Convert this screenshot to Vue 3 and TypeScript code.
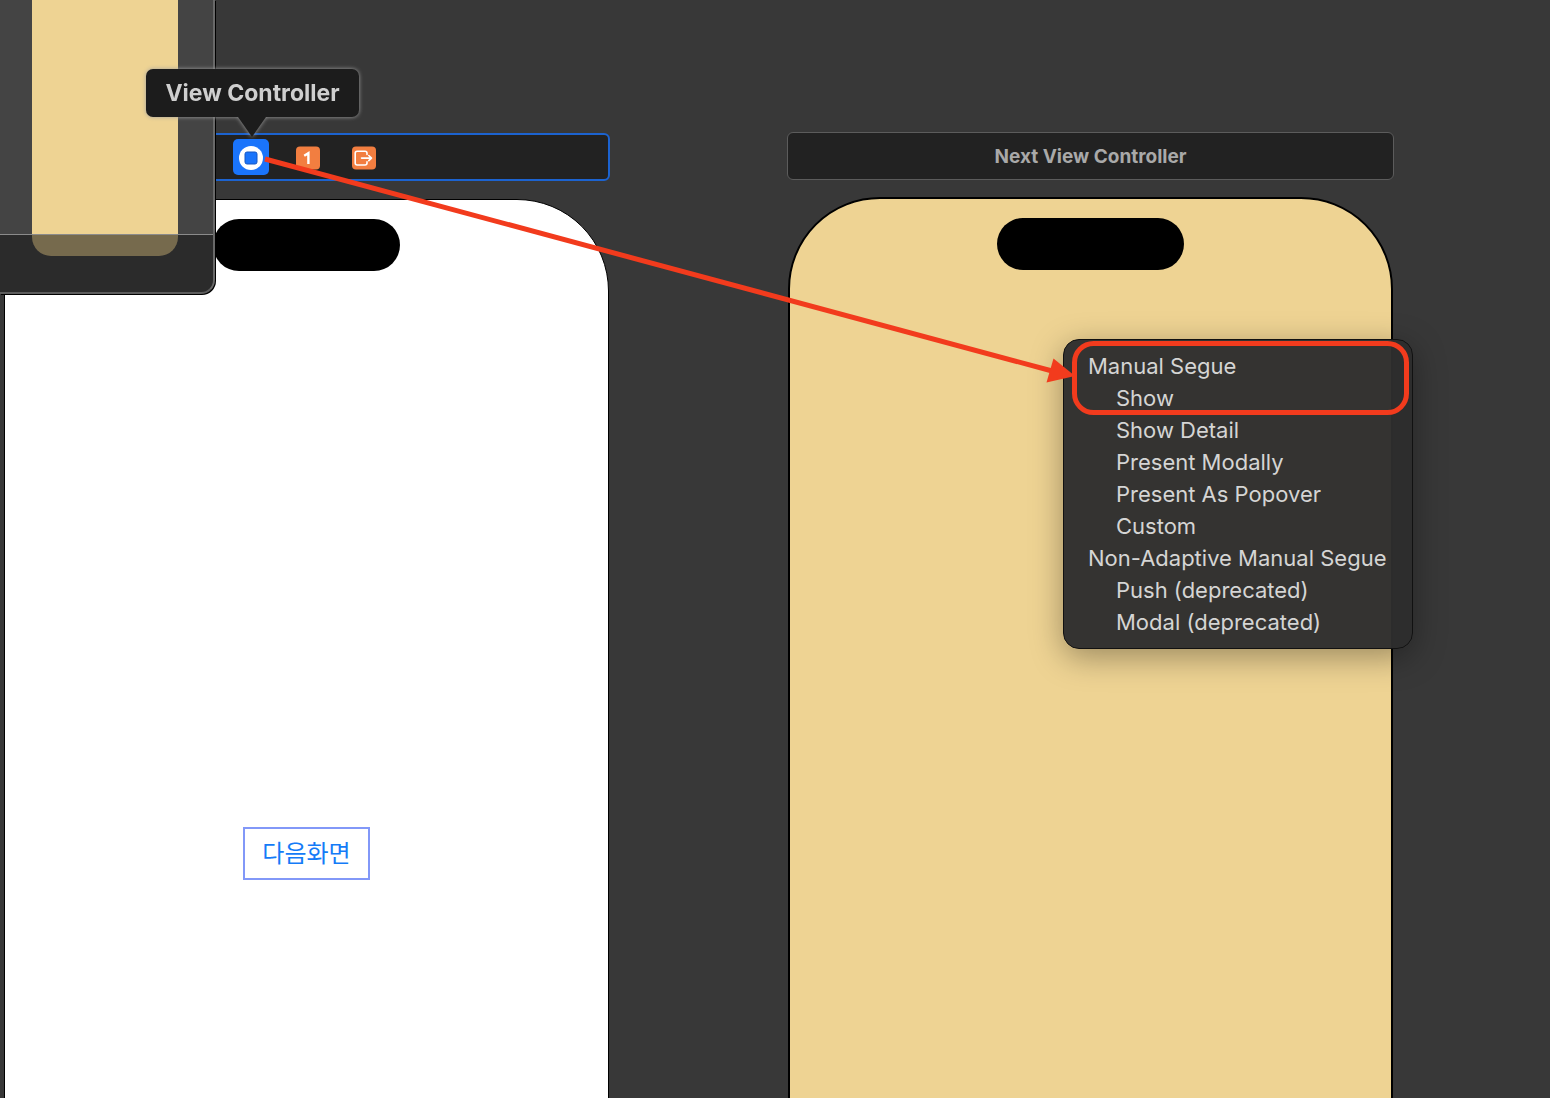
<script setup lang="ts">
interface MenuRow {
  label: string
  heading?: boolean
}

const menuRows: MenuRow[] = [
  { label: 'Manual Segue', heading: true },
  { label: 'Show' },
  { label: 'Show Detail' },
  { label: 'Present Modally' },
  { label: 'Present As Popover' },
  { label: 'Custom' },
  { label: 'Non-Adaptive Manual Segue', heading: true },
  { label: 'Push (deprecated)' },
  { label: 'Modal (deprecated)' },
]
</script>

<template>
  <main class="canvas">
    <section class="scene scene-first" aria-label="View Controller scene">
      <header class="dock dock-selected">
        <button class="dock-item" type="button" aria-label="View Controller">
          <svg viewBox="0 0 36 36" width="36" height="36">
            <rect width="36" height="36" rx="5" fill="#1a74fb" />
            <circle cx="18" cy="19" r="12" fill="#fff" />
            <rect x="12" y="13" width="12" height="12" rx="2" fill="#1a74fb" stroke="#1557c4" stroke-width="1" />
          </svg>
        </button>
        <button class="dock-item" type="button" aria-label="First Responder">
          <svg viewBox="0 0 36 36" width="36" height="36">
            <rect x="7" y="7.5" width="24" height="23" rx="4" fill="#f27e40" />
            <path d="M15.2 16.8L19.4 14.2V25" fill="none" stroke="#fff" stroke-width="2.4" />
          </svg>
        </button>
        <button class="dock-item" type="button" aria-label="Exit">
          <svg viewBox="0 0 36 36" width="36" height="36">
            <rect x="7" y="7.5" width="24" height="23" rx="4" fill="#f27e40" />
            <g fill="none" stroke="#fff" stroke-width="1.6" stroke-linecap="round" stroke-linejoin="round">
              <path d="M22 15.5V14.2Q22 12.2 20 12.2H12.2Q10.200 12.2 10.2 14.2V24Q10.2 26 12.2 26H20Q22 26 22 24V22.7" />
              <path d="M16.500 19.100H26.400M23.800 16.500L26.500 19.100L23.800 21.700" />
            </g>
          </svg>
        </button>
      </header>
      <div class="phone phone-light">
        <div class="island"></div>
        <button class="next-button" type="button">다음화면</button>
      </div>
    </section>

    <section class="scene scene-next" aria-label="Next View Controller scene">
      <header class="dock">Next View Controller</header>
      <div class="phone phone-sand">
        <div class="island"></div>
      </div>
    </section>

    <aside class="minimap" aria-label="Canvas overview">
      <div class="minimap-phone"></div>
      <div class="minimap-shade"></div>
    </aside>

    <div class="tooltip" role="tooltip">View Controller</div>

    <ul class="segue-menu">
      <li v-for="row in menuRows" :key="row.label">
        <span v-if="row.heading" class="menu-heading">{{ row.label }}</span>
        <button v-else class="menu-action" type="button">{{ row.label }}</button>
      </li>
    </ul>

    <svg class="annotation" width="1550" height="700" viewBox="0 0 1550 700" aria-hidden="true">
      <path d="M265 159L1054 371.5" fill="none" stroke="#f23b1d" stroke-width="5" />
      <path d="M1053.5 358.5L1075 376L1046.5 382.5Z" fill="#f23b1d" />
      <rect x="1074.5" y="343.5" width="332" height="69" rx="19" fill="none" stroke="#f23b1d" stroke-width="5" />
    </svg>
  </main>
</template>

<style>
body {
  margin: 0;
  background: #383838;
}
</style>

<style scoped>
.canvas {
  position: relative;
  height: 100vh;
  overflow: hidden;
  background: #383838;
  font-family: Inter, "Noto Sans CJK KR", sans-serif;
}

button {
  margin: 0;
  padding: 0;
  border: 0;
  background: none;
  font: inherit;
  color: inherit;
}

.scene {
  position: absolute;
  width: 607px;
}

.scene-first {
  top: 133px;
  left: 3px;
}

.scene-next {
  top: 132px;
  left: 787px;
}

.dock {
  box-sizing: border-box;
  display: flex;
  align-items: center;
  justify-content: center;
  gap: 20px;
  height: 48px;
  border: 1px solid #5c5c5c;
  border-radius: 6px;
  background: #222;
  color: #a9a9a9;
  font-size: 19px;
  font-weight: 700;
}

.dock-selected {
  border: 2px solid #1c63d0;
}

.dock-item {
  width: 36px;
  height: 36px;
}

.dock-item svg {
  display: block;
}

.phone {
  box-sizing: border-box;
  display: flex;
  flex-direction: column;
  align-items: center;
  min-height: 1303px;
  margin: 17px 1px 0;
  padding-top: 19px;
  border: 2px solid #000;
  border-radius: 92px;
}

.phone-light {
  margin-top: 18px;
  border-width: 1px;
  background: #fff;
}

.phone-sand {
  background: #eed393;
}

.island {
  width: 187px;
  height: 52px;
  border-radius: 26px;
  background: #000;
}

.next-button {
  box-sizing: border-box;
  width: 127px;
  height: 53px;
  margin-top: 556px;
  padding-bottom: 4px;
  border: 2px solid #8298f8;
  color: #147bf7;
  font-family: "Noto Sans CJK KR", sans-serif;
  font-size: 24px;
  line-height: 40px;
}

.minimap {
  box-sizing: border-box;
  position: absolute;
  top: 0;
  left: 0;
  width: 215px;
  height: 294px;
  overflow: hidden;
  border-right: 2px solid #696969;
  border-bottom: 2px solid #5c5c5c;
  border-bottom-right-radius: 14px;
  background: #444;
  box-shadow: 1px 1px 0 #000;
}

.minimap-phone {
  width: 146px;
  height: 256px;
  margin-left: 32px;
  border-radius: 0 0 19px 19px;
  background: #eed393;
}

.minimap-shade {
  position: absolute;
  inset: 234px 0 0;
  border-top: 1px solid #8b8b8b;
  background: rgba(23, 23, 23, 0.56);
}

.tooltip {
  position: absolute;
  top: 69px;
  left: 146px;
  width: 213px;
  border-radius: 7px;
  background: #1c1c1c;
  color: #cfcfcf;
  filter: drop-shadow(0 0 2px #a0a0a0);
  font-size: 23px;
  font-weight: 700;
  line-height: 48px;
  text-align: center;
}

.tooltip::after {
  content: "";
  position: absolute;
  top: 100%;
  left: 92px;
  border: 14px solid transparent;
  border-top: 20px solid #1c1c1c;
  border-bottom: 0;
}

.segue-menu {
  box-sizing: border-box;
  position: absolute;
  top: 339px;
  left: 1063px;
  width: 350px;
  margin: 0;
  padding: 10px 0 10px 24px;
  border: 1px solid #111;
  border-radius: 16px;
  background: rgba(45, 45, 45, 0.97);
  box-shadow: 0 8px 32px rgba(0, 0, 0, 0.35);
  color: #d5d5d4;
  font-size: 22px;
  line-height: 32px;
  list-style: none;
  white-space: nowrap;
}

.segue-menu li {
  height: 32px;
}

.menu-action {
  padding-left: 28px;
}

.annotation {
  position: absolute;
  top: 0;
  left: 0;
  pointer-events: none;
}
</style>
